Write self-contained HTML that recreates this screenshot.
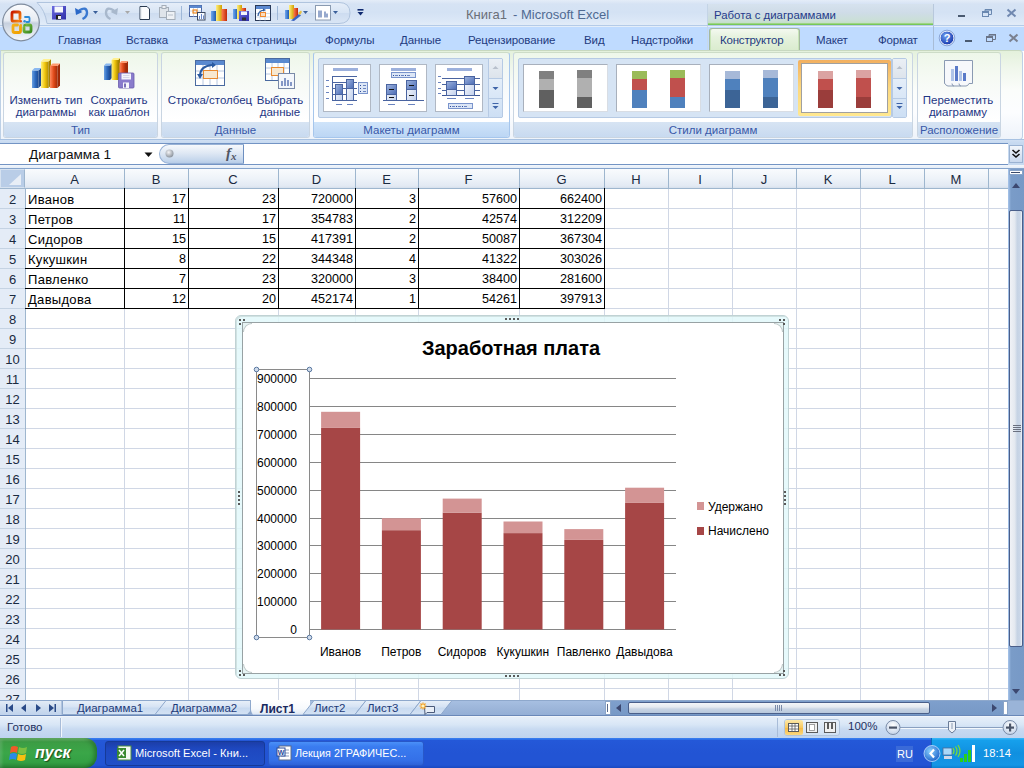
<!DOCTYPE html><html><head><meta charset="utf-8"><style>
*{margin:0;padding:0;box-sizing:border-box}
html,body{width:1024px;height:768px;overflow:hidden;background:#fff}
body{font-family:"Liberation Sans",sans-serif;position:relative}
div{position:absolute}
.t{white-space:nowrap;line-height:1}
svg{position:absolute;overflow:visible}
</style></head><body><div style="left:0px;top:0px;width:1024px;height:25px;background:linear-gradient(#e4edf8 0,#d6e3f4 4px,#d4e2f4 50%,#dce8f7 85%,#e2ecf8 100%)"></div>
<div style="left:0px;top:25px;width:1024px;height:1px;background:#b4cbe8"></div>
<div style="left:0px;top:26px;width:1024px;height:1px;background:#e4eefa"></div>
<div style="left:0px;top:27px;width:1024px;height:24px;background:#bfdbff"></div>
<svg style="left:0;top:0" width="50" height="50" viewBox="0 0 50 50">
<defs>
<linearGradient id="ob" x1="0" y1="0" x2="0" y2="1"><stop offset="0" stop-color="#fbfcfe"/><stop offset="0.45" stop-color="#e6ebf2"/><stop offset="0.52" stop-color="#c6d0de"/><stop offset="0.8" stop-color="#e2e8f0"/><stop offset="1" stop-color="#f6f8fb"/></linearGradient>
</defs>
<circle cx="21" cy="22.5" r="18.3" fill="url(#ob)" stroke="#7f8c9e" stroke-width="1.2"/>
<defs>
<linearGradient id="lr" x1="0" y1="0" x2="1" y2="1"><stop offset="0" stop-color="#c81800"/><stop offset="1" stop-color="#f88a10"/></linearGradient>
<linearGradient id="ly" x1="0" y1="0" x2="1" y2="1"><stop offset="0" stop-color="#f4b018"/><stop offset="1" stop-color="#f0a000"/></linearGradient>
<linearGradient id="lg" x1="0" y1="0" x2="1" y2="1"><stop offset="0" stop-color="#80c040"/><stop offset="1" stop-color="#3a8a20"/></linearGradient>
</defs>
<path d="M19 21.2 L13.5 21.2 Q12 21.2 12 19.7 L12 13.5 Q12 12 13.5 12 L18.5 12 Q20 12 20 13.5 L20 18.5" fill="none" stroke="url(#lr)" stroke-width="2.8" stroke-linecap="round"/>
<path d="M25 17 L28.5 17 Q29.5 17 29.5 18 L29.5 21 Q29.5 22 28.5 22 L26.5 22" fill="none" stroke="#2a8ad8" stroke-width="1.8" stroke-linecap="round"/>
<path d="M20.5 26.5 L20.5 31 Q20.5 32.5 19 32.5 L14.5 32.5 Q13 32.5 13 31 L13 26.5 Q13 25 14.5 25 L17.5 25" fill="none" stroke="url(#ly)" stroke-width="2.8" stroke-linecap="round"/>
<path d="M26 25 L29.5 25 Q31 25 31 26.5 L31 30.5 Q31 32 29.5 32 L25.5 32 Q24 32 24 30.5 L24 27.5" fill="none" stroke="url(#lg)" stroke-width="2.8" stroke-linecap="round"/>
<circle cx="20.8" cy="21.3" r="1.2" fill="#e85010"/><circle cx="24.6" cy="21.3" r="1.2" fill="#2a8ad8"/>
<circle cx="20.8" cy="25.2" r="1.2" fill="#f4a818"/><circle cx="24.6" cy="25.2" r="1.2" fill="#58a830"/>
</svg>
<svg style="left:30px;top:0" width="330" height="26">
<defs><linearGradient id="qg" x1="0" y1="0" x2="0" y2="1"><stop offset="0" stop-color="#e6eef9"/><stop offset="0.5" stop-color="#d7e4f4"/><stop offset="0.52" stop-color="#cddcf0"/><stop offset="1" stop-color="#dae6f5"/></linearGradient></defs>
<path d="M7 2.5 L309 2.5 Q320 2.5 320 13 Q320 23.5 309 23.5 L17 23.5 Q15 10 7 2.5 Z" fill="url(#qg)" stroke="#b0c4de" stroke-width="1"/>
</svg>

<svg style="left:0;top:0" width="380" height="26" viewBox="0 0 380 26">
<defs>
<linearGradient id="qfl" x1="0" y1="0" x2="1" y2="1"><stop offset="0" stop-color="#6a6ae0"/><stop offset="1" stop-color="#3030a8"/></linearGradient>
<linearGradient id="qb" x1="0" x2="1"><stop offset="0" stop-color="#70a8f0"/><stop offset="1" stop-color="#1e5ab0"/></linearGradient>
<linearGradient id="qy" x1="0" x2="1"><stop offset="0" stop-color="#fff080"/><stop offset="1" stop-color="#d0a000"/></linearGradient>
<linearGradient id="qr" x1="0" x2="1"><stop offset="0" stop-color="#ff8050"/><stop offset="1" stop-color="#c02808"/></linearGradient>
</defs>
<!-- save -->
<rect x="52" y="6" width="14" height="13.5" fill="url(#qfl)"/>
<rect x="54.5" y="6.5" width="8.5" height="6" fill="#f6f8fc"/>
<rect x="56" y="15" width="5" height="4.5" fill="#202020"/><rect x="58" y="16" width="3" height="3" fill="#f0f0f0"/>
<!-- undo -->
<path d="M79 10.5 Q86.5 6 87 12.5 Q87 17 82.5 19" fill="none" stroke="#3a78d0" stroke-width="2.4"/>
<path d="M75 8 L76 15 L82.5 12 Z" fill="#2a68c8"/>
<path d="M93 11 L98 11 L95.5 14 Z" fill="#3a5f9a"/>
<!-- redo disabled -->
<path d="M114 10.5 Q106.5 6 106 12.5 Q106 17 110.5 19" fill="none" stroke="#a8b8cc" stroke-width="2.4"/>
<path d="M118 8 L117 15 L110.5 12 Z" fill="#a8b8cc"/>
<path d="M125 11 L130 11 L127.5 14 Z" fill="#a8a8a8"/>
<!-- new doc -->
<path d="M140 6.5 L147 6.5 L149.5 9 L149.5 19.5 L140 19.5 Z" fill="#fbfcfe" stroke="#2a3a50" stroke-width="1"/>
<path d="M141 7 L141 19" stroke="#e0e4ea"/>
<!-- paste disabled -->
<rect x="159.5" y="7.5" width="9" height="10" fill="#dfe4ea" stroke="#a4adb8"/>
<rect x="162" y="5.5" width="4" height="3" fill="#eef0f4" stroke="#a4adb8"/>
<rect x="166.5" y="11.5" width="8.5" height="8" fill="#eef1f5" stroke="#a4adb8"/>
<line x1="168" y1="15" x2="173" y2="15" stroke="#b8c0ca"/>
<line x1="181.5" y1="6" x2="181.5" y2="20" stroke="#9fb8d8"/>
<!-- table + chart -->
<rect x="189.5" y="5.5" width="12" height="11" fill="#fff" stroke="#4a64a0"/><rect x="189.5" y="5.5" width="12" height="2.5" fill="#5a88d0"/>
<path d="M189.5 11 H201.5 M193.5 8 V16.5 M197.5 8 V16.5" stroke="#c0cce0" stroke-width="0.8"/>
<rect x="193" y="10" width="4" height="3" fill="none" stroke="#f08a20" stroke-width="1.2"/>
<rect x="197.5" y="12.5" width="7.5" height="7.5" fill="#fafcff" stroke="#3a4860"/>
<path d="M199.5 19 V16 M201.5 19 V14 M203.5 19 V15.5" stroke="#6a88c8" stroke-width="1"/>
<!-- chart bars -->
<rect x="211" y="11" width="5" height="10" fill="url(#qb)"/>
<rect x="216" y="5" width="6" height="16" fill="url(#qy)"/>
<rect x="221.5" y="9" width="5.5" height="12" fill="url(#qr)"/>
<!-- bars + floppy -->
<rect x="233" y="9" width="4.5" height="10" fill="url(#qb)"/>
<rect x="237" y="5" width="5" height="14" fill="url(#qy)"/>
<rect x="241.5" y="8" width="4.5" height="4" fill="url(#qr)"/>
<rect x="239" y="11" width="10" height="10" fill="url(#qfl)"/><rect x="241" y="11.5" width="6" height="3.5" fill="#f4f6fc"/><rect x="242" y="17.5" width="4" height="3" fill="#303030"/>
<!-- table w/ arrows -->
<rect x="255.5" y="5.5" width="15" height="15" fill="#fff" stroke="#2a3a58"/><rect x="256" y="6" width="14" height="3" fill="#5a88d0"/>
<path d="M256 13.5 H270 M256 17 H270 M260 9 V20.5 M265 9 V20.5" stroke="#c8d4e6" stroke-width="0.8"/>
<rect x="260.5" y="12.5" width="5" height="4" fill="#f8dcc0" stroke="#f08a30"/>
<path d="M258 16 Q258 11 264 10" fill="none" stroke="#2a5aa0" stroke-width="1.2"/><path d="M263 8.5 L266 10 L263 11.5Z" fill="#2a5aa0"/>
<line x1="277.5" y1="6" x2="277.5" y2="20" stroke="#9fb8d8"/>
<!-- chart w/ brush -->
<rect x="285" y="10" width="4" height="9" fill="url(#qb)"/>
<rect x="289" y="5" width="5" height="14" fill="url(#qy)"/>
<rect x="293.5" y="8" width="4.5" height="10" fill="url(#qr)"/>
<path d="M291 20.5 L299 14 L301 15.5 L294 21 Z" fill="#3a64c0"/><path d="M298 13 L301 10.5 L302 12 L300 15Z" fill="#e8c040"/>
<path d="M303 11 L308 11 L305.5 14 Z" fill="#3a5f9a"/>
<!-- box chart -->
<rect x="315.5" y="5.5" width="15" height="14.5" fill="#fff" stroke="#8a9ab0"/>
<path d="M319 17.5 V10.5 M321 17.5 V10.5 M325 17.5 V11.5 M327 17.5 V13.5" stroke="#6a84b8" stroke-width="1.4"/>
<path d="M333 11 L338 11 L335.5 14 Z" fill="#3a5f9a"/>
<!-- customize -->
<rect x="357.5" y="9" width="6" height="1.6" fill="#102a70"/>
<path d="M357.5 12 L363.5 12 L360.5 15.5 Z" fill="#102a70"/>
</svg>
<div class="t" style="left:466px;top:8px;font-size:13px;color:#6a6f78">Книга1</div>
<div class="t" style="left:513px;top:8px;font-size:13px;color:#4f6a92">- Microsoft Excel</div>
<div style="left:707px;top:4px;width:227px;height:21px;background:linear-gradient(#d6e2ee,#cfdce8 40%,#cadfd6 80%,#c0e0b8);border-left:1px solid #c4d4e6;border-right:1px solid #b8c8dc"></div>
<div style="left:708px;top:23px;width:225px;height:1px;background:#9cd486"></div>
<div style="left:708px;top:24px;width:225px;height:1px;background:#78c858"></div>
<div class="t" style="left:714px;top:10px;font-size:11.4px;color:#263a8c">Работа с диаграммами</div>
<svg style="left:950px;top:5px" width="74" height="16">
<rect x="8" y="10" width="7" height="2" fill="#4a5a70"/>
<rect x="32.5" y="6.5" width="6" height="5" fill="none" stroke="#6a88b0" stroke-width="1"/><rect x="32" y="6" width="7" height="2" fill="#6a88b0"/>
<path d="M35 6 V4.5 H41.5 V9.5 H39" fill="none" stroke="#6a88b0" stroke-width="1"/><rect x="35" y="4" width="7" height="1.6" fill="#6a88b0"/>
<path d="M57.5 4.5 L65.5 11.5 M65.5 4.5 L57.5 11.5" stroke="#7088b0" stroke-width="2"/>
</svg>
<div class="t" style="left:58px;top:35px;font-size:11.5px;letter-spacing:-0.1px;color:#1e3a80">Главная</div>
<div class="t" style="left:126px;top:35px;font-size:11.5px;letter-spacing:-0.1px;color:#1e3a80">Вставка</div>
<div class="t" style="left:194px;top:35px;font-size:11.5px;letter-spacing:-0.1px;color:#1e3a80">Разметка страницы</div>
<div class="t" style="left:325px;top:35px;font-size:11.5px;letter-spacing:-0.1px;color:#1e3a80">Формулы</div>
<div class="t" style="left:400px;top:35px;font-size:11.5px;letter-spacing:-0.1px;color:#1e3a80">Данные</div>
<div class="t" style="left:468px;top:35px;font-size:11.5px;letter-spacing:-0.1px;color:#1e3a80">Рецензирование</div>
<div class="t" style="left:584px;top:35px;font-size:11.5px;letter-spacing:-0.1px;color:#1e3a80">Вид</div>
<div class="t" style="left:631px;top:35px;font-size:11.5px;letter-spacing:-0.1px;color:#1e3a80">Надстройки</div>
<div style="left:707px;top:26px;width:1px;height:24px;background:#c8d8ea"></div>
<div style="left:933px;top:26px;width:1px;height:24px;background:#a8bcd6"></div>
<div style="left:709px;top:28px;width:91px;height:24px;border:1px solid #a4b8a0;border-bottom:none;border-radius:3px 3px 0 0;background:linear-gradient(#f4f9f0,#e6f2de 35%,#d8ebcc 100%);box-shadow:inset 1px 0 0 #c8e4b8,inset -1px 0 0 #c8e4b8"></div>
<div class="t" style="left:720px;top:35px;font-size:11.5px;letter-spacing:-0.2px;color:#1e3a80">Конструктор</div>
<div class="t" style="left:816px;top:35px;font-size:11.5px;letter-spacing:-0.2px;color:#1e3a80">Макет</div>
<div class="t" style="left:878px;top:35px;font-size:11.5px;letter-spacing:-0.2px;color:#1e3a80">Формат</div>
<svg style="left:936px;top:28px" width="88" height="20">
<defs><radialGradient id="hg" cx="40%" cy="35%" r="70%"><stop offset="0" stop-color="#6fa0f0"/><stop offset="1" stop-color="#1030a8"/></radialGradient></defs>
<circle cx="11" cy="10" r="7" fill="url(#hg)" stroke="#fff" stroke-width="1"/>
<circle cx="11" cy="10" r="7.8" fill="none" stroke="#5a78b8" stroke-width="0.6"/>
<text x="11" y="14" font-family="Liberation Sans" font-weight="bold" font-size="11" fill="#fff" text-anchor="middle">?</text>
<rect x="29" y="12" width="7" height="2" fill="#4a5a70"/>
<rect x="50.5" y="8.5" width="6" height="5" fill="none" stroke="#6a7488" stroke-width="1"/><rect x="50" y="8" width="7" height="2" fill="#6a7488"/>
<path d="M53 8 V6.5 H59.5 V11.5 H57" fill="none" stroke="#6a7488" stroke-width="1"/><rect x="53" y="6" width="7" height="1.6" fill="#6a7488"/>
<path d="M73.5 6.5 L81.5 13.5 M81.5 6.5 L73.5 13.5" stroke="#7a8090" stroke-width="2"/>
</svg>
<div style="left:0px;top:50px;width:1023px;height:90px;border:1px solid #bdd0e6;border-top-color:#c8d8c0;border-radius:0 4px 4px 0;background:linear-gradient(#e4f1dc 0%,#f0f7ec 20%,#fbfdfb 45%,#fcfdff 70%,#eef3fa 100%)"></div>
<div style="left:3px;top:52px;width:155px;height:86px;border:1px solid #c9d5e2;border-top-color:#cddcc8;border-radius:3px;background:linear-gradient(#eef7ea 0%,#f6faf4 30%,#fbfcfd 60%,#ffffff 80%)"></div>
<div style="left:4px;top:122px;width:153px;height:15px;border-radius:0 0 2px 2px;background:linear-gradient(#d7e4f3,#c8daf0)"></div>
<div class="t" style="left:3px;top:125px;width:155px;text-align:center;font-size:11.5px;color:#3858a8">Тип</div>
<div style="left:161px;top:52px;width:149px;height:86px;border:1px solid #c9d5e2;border-top-color:#cddcc8;border-radius:3px;background:linear-gradient(#eef7ea 0%,#f6faf4 30%,#fbfcfd 60%,#ffffff 80%)"></div>
<div style="left:162px;top:122px;width:147px;height:15px;border-radius:0 0 2px 2px;background:linear-gradient(#d7e4f3,#c8daf0)"></div>
<div class="t" style="left:161px;top:125px;width:149px;text-align:center;font-size:11.5px;color:#3858a8">Данные</div>
<div style="left:313px;top:52px;width:197px;height:86px;border:1px solid #a6c6ec;border-top-color:#cddcc8;border-radius:3px;background:linear-gradient(#eef6ee 0%,#f4f8f8 30%,#fafcfe 60%,#ffffff 80%)"></div>
<div style="left:314px;top:122px;width:195px;height:15px;border-radius:0 0 2px 2px;background:linear-gradient(#cfe4fa,#bcd6f4)"></div>
<div class="t" style="left:313px;top:125px;width:197px;text-align:center;font-size:11.5px;color:#3858a8">Макеты диаграмм</div>
<div style="left:513px;top:52px;width:400px;height:86px;border:1px solid #c9d5e2;border-top-color:#cddcc8;border-radius:3px;background:linear-gradient(#eef7ea 0%,#f6faf4 30%,#fbfcfd 60%,#ffffff 80%)"></div>
<div style="left:514px;top:122px;width:398px;height:15px;border-radius:0 0 2px 2px;background:linear-gradient(#d7e4f3,#c8daf0)"></div>
<div class="t" style="left:513px;top:125px;width:400px;text-align:center;font-size:11.5px;color:#3858a8">Стили диаграмм</div>
<div style="left:917px;top:52px;width:84px;height:86px;border:1px solid #c9d5e2;border-top-color:#cddcc8;border-radius:3px;background:linear-gradient(#eef7ea 0%,#f6faf4 30%,#fbfcfd 60%,#ffffff 80%)"></div>
<div style="left:918px;top:122px;width:82px;height:15px;border-radius:0 0 2px 2px;background:linear-gradient(#d7e4f3,#c8daf0)"></div>
<div class="t" style="left:917px;top:125px;width:84px;text-align:center;font-size:11.5px;color:#3858a8">Расположение</div>
<div class="t" style="left:-14px;top:95px;width:120px;text-align:center;font-size:11.5px;color:#1e3684">Изменить тип</div>
<div class="t" style="left:-14px;top:107px;width:120px;text-align:center;font-size:11.5px;color:#1e3684">диаграммы</div>
<div class="t" style="left:59px;top:95px;width:120px;text-align:center;font-size:11.5px;color:#1e3684">Сохранить</div>
<div class="t" style="left:59px;top:107px;width:120px;text-align:center;font-size:11.5px;color:#1e3684">как шаблон</div>
<div class="t" style="left:150px;top:95px;width:120px;text-align:center;font-size:11.5px;color:#1e3684">Строка/столбец</div>
<div class="t" style="left:220px;top:95px;width:120px;text-align:center;font-size:11.5px;color:#1e3684">Выбрать</div>
<div class="t" style="left:220px;top:107px;width:120px;text-align:center;font-size:11.5px;color:#1e3684">данные</div>
<div class="t" style="left:898px;top:95px;width:120px;text-align:center;font-size:11.5px;color:#1e3684">Переместить</div>
<div class="t" style="left:898px;top:107px;width:120px;text-align:center;font-size:11.5px;color:#1e3684">диаграмму</div>
<svg style="left:0;top:52px" width="320" height="40">
<defs>
<linearGradient id="bb" x1="0" x2="1"><stop offset="0" stop-color="#6aa0e0"/><stop offset="0.5" stop-color="#2e6cc0"/><stop offset="1" stop-color="#1e4a90"/></linearGradient>
<linearGradient id="by" x1="0" x2="1"><stop offset="0" stop-color="#fff07a"/><stop offset="0.5" stop-color="#f2c810"/><stop offset="1" stop-color="#b08a00"/></linearGradient>
<linearGradient id="br" x1="0" x2="1"><stop offset="0" stop-color="#ff8a60"/><stop offset="0.5" stop-color="#e04a1a"/><stop offset="1" stop-color="#a02a08"/></linearGradient>
</defs>
<!-- change chart type -->
<path d="M32 18.5 H38.5 V36 H32 Z" fill="url(#bb)"/><path d="M38.5 18.5 L41 16 V33.5 L38.5 36 Z" fill="#1e4a90"/><path d="M32 18.5 L34.5 16 H41 L38.5 18.5 Z" fill="#8ab8f0"/><path d="M41 9.5 H48.5 V36 H41 Z" fill="url(#by)"/><path d="M48.5 9.5 L51 7 V33.5 L48.5 36 Z" fill="#a88400"/><path d="M41 9.5 L43.5 7 H51 L48.5 9.5 Z" fill="#fff090"/><path d="M50 14.0 H57.5 V36 H50 Z" fill="url(#br)"/><path d="M57.5 14.0 L60 11.5 V33.5 L57.5 36 Z" fill="#a02a08"/><path d="M50 14.0 L52.5 11.5 H60 L57.5 14.0 Z" fill="#ff9a70"/>
<!-- save as template -->
<path d="M104 13.5 H110 V28 H104 Z" fill="url(#bb)"/><path d="M110 13.5 L112 11.5 V26 L110 28 Z" fill="#1e4a90"/><path d="M104 13.5 L106 11.5 H112 L110 13.5 Z" fill="#8ab8f0"/><path d="M111.5 8 H118.0 V28 H111.5 Z" fill="url(#by)"/><path d="M118.0 8 L120.0 6 V26 L118.0 28 Z" fill="#a88400"/><path d="M111.5 8 L113.5 6 H120.0 L118.0 8 Z" fill="#fff090"/><path d="M119.5 11 H126.0 V28 H119.5 Z" fill="url(#br)"/><path d="M126.0 11 L128.0 9 V26 L126.0 28 Z" fill="#a02a08"/><path d="M119.5 11 L121.5 9 H128.0 L126.0 11 Z" fill="#ff9a70"/><rect x="118.5" y="21" width="15.5" height="15" rx="1" fill="#8a7ccc" stroke="#6a5cac" stroke-width="0.8"/><rect x="121.5" y="21.5" width="9.5" height="6" fill="#f4f4fc"/><path d="M123 23.5 H129.5 M123 25.5 H129.5" stroke="#c8c8e0" stroke-width="0.7"/><rect x="123" y="30.5" width="6" height="5.5" fill="#f8f8fc"/><rect x="124" y="31.5" width="2" height="4" fill="#7a70b8"/>
<!-- switch row/col -->
<rect x="195.5" y="8.5" width="29" height="25" fill="#fff" stroke="#4a6aa0"/>
<rect x="196" y="9" width="28" height="4" fill="#5a8ad0"/>
<path d="M196 19 H224 M196 26 H224 M203 13 V33 M210 13 V33 M217 13 V33" stroke="#b8c8e0"/>
<rect x="203.5" y="18.5" width="14" height="8" fill="#f8e8d0" stroke="#e88a30"/>
<path d="M200 24 Q200 14 212 13" fill="none" stroke="#2a5aa0" stroke-width="2"/>
<path d="M212 10 L216 13 L212 16Z" fill="#2a5aa0"/><path d="M197 22 L200 27 L203 22Z" fill="#2a5aa0"/>
<!-- select data -->
<rect x="265.5" y="6.5" width="24" height="22" fill="#fff" stroke="#4a6aa0"/>
<rect x="266" y="7" width="23" height="4" fill="#5a8ad0"/>
<path d="M266 16 H289 M266 22 H289 M272 11 V28 M278 11 V28 M284 11 V28" stroke="#b8c8e0"/>
<rect x="271.5" y="15.5" width="12" height="8" fill="#f8e8d0" stroke="#e88a30"/>
<rect x="278.5" y="21.5" width="16" height="15" fill="#f4f7fc" stroke="#7a8aa8"/>
<path d="M282 34 V29 M285 34 V26 M288 34 V28 M291 34 V30" stroke="#6a80b8" stroke-width="1.6"/>
</svg>
<svg style="left:940px;top:58px" width="40" height="32">
<path d="M4.5 2.5 H32.5 V25.5 H29 Q28 28 26 28 H8 Q6 28 5 25.5 H4.5 Z" fill="#f6f8fb" stroke="#8a9ab2"/>
<path d="M12 25.5 Q12 28 14 28 M19 25.5 Q19 28 21 28" fill="none" stroke="#8a9ab2"/>
<rect x="11" y="11" width="3" height="12" fill="#b0c4e8"/><rect x="15" y="8" width="3" height="15" fill="#5a7ac8"/>
<rect x="19" y="13" width="3" height="10" fill="#b0c4e8"/><rect x="23" y="15" width="3" height="8" fill="#5a7ac8"/>
</svg>
<div style="left:318px;top:58px;width:185px;height:60px;border:1px solid #b6cae4;border-radius:2px;background:#d6e4f4"></div>
<div style="left:323px;top:64px;width:48px;height:48px;border:1px solid #b0b8c4;background:#fff"></div>
<div style="left:379px;top:64px;width:48px;height:48px;border:1px solid #b0b8c4;background:#fff"></div>
<div style="left:435px;top:64px;width:48px;height:48px;border:1px solid #b0b8c4;background:#fff"></div>
<svg style="left:0;top:0" width="520" height="130">
<defs>
<linearGradient id="ld" x1="0" y1="0" x2="1" y2="1"><stop offset="0" stop-color="#9ab0dc"/><stop offset="1" stop-color="#5070b8"/></linearGradient>
<linearGradient id="ll" x1="0" y1="0" x2="1" y2="1"><stop offset="0" stop-color="#ffffff"/><stop offset="1" stop-color="#c0cfec"/></linearGradient>
</defs>
<g shape-rendering="crispEdges">
<!-- thumb 1 -->
<rect x="333" y="68" width="25" height="3" fill="#9cb0dc"/>
<path d="M332 76.5 H357 M332 82.5 H357 M332 88.5 H357 M332 94.5 H357 M332 100.5 H357 M332.5 76 V101" stroke="#4a64a0" stroke-width="1"/>
<path d="M326 80.5 H329 M326 86.5 H329 M326 92.5 H329 M326 98.5 H329 M336 104.5 H342 M347 104.5 H353" stroke="#6a84c0" stroke-width="1"/>
<rect x="335.5" y="84.5" width="7" height="16" fill="url(#ll)" stroke="#4a64a0"/><rect x="336" y="85" width="6" height="9" fill="url(#ld)"/><path d="M336 94.5 H342" stroke="#4a64a0"/>
<rect x="346.5" y="79.5" width="7" height="21" fill="url(#ll)" stroke="#4a64a0"/><rect x="347" y="80" width="6" height="8" fill="url(#ld)"/><path d="M347 88.5 H353" stroke="#4a64a0"/>
<rect x="358.5" y="82.5" width="9" height="11" fill="#dce6f6" stroke="#7a94cc"/>
<path d="M360 85.5 H361 M360 88.5 H361 M360 91.5 H361" stroke="#2a4a98" stroke-width="1.5"/><path d="M363 85.5 H366 M363 88.5 H366 M363 91.5 H366" stroke="#6a84c0"/>
<!-- thumb 2 -->
<rect x="391" y="68" width="25" height="3" fill="#9cb0dc"/>
<rect x="391.5" y="72.5" width="24" height="5" fill="#dce6f6" stroke="#7a94cc"/>
<path d="M393 75.5 H394 M399 75.5 H400 M405 75.5 H406" stroke="#2a4a98" stroke-width="1.5"/><path d="M395 75.5 H398 M401 75.5 H404 M407 75.5 H410" stroke="#6a84c0"/>
<path d="M383 100.5 H424" stroke="#4a64a0" stroke-width="1"/>
<rect x="386.5" y="84.5" width="10" height="16" fill="url(#ll)" stroke="#4a64a0"/><rect x="387" y="85" width="9" height="9" fill="url(#ld)"/><path d="M387 94.5 H396" stroke="#4a64a0"/>
<rect x="406.5" y="80.5" width="10" height="20" fill="url(#ll)" stroke="#4a64a0"/><rect x="407" y="81" width="9" height="8" fill="url(#ld)"/><path d="M407 89.5 H416" stroke="#4a64a0"/>
<path d="M389 89.5 H394 M389 97.5 H394 M409 85.5 H414 M409 95.5 H414" stroke="#101010" stroke-width="1"/>
<path d="M388 104.5 H395 M408 104.5 H415" stroke="#6a84c0"/>
<!-- thumb 3 -->
<rect x="447" y="68" width="25" height="3" fill="#9cb0dc"/>
<path d="M442 78.5 H480 M442 84.5 H480 M442 90.5 H480" stroke="#4a64a0" stroke-width="1"/>
<path d="M442 95.5 H480" stroke="#3a5494" stroke-width="1"/>
<path d="M438 76.5 H441 M438 82.5 H441 M438 88.5 H441 M438 93.5 H441 M447 98.5 H456 M465 98.5 H474" stroke="#6a84c0"/>
<rect x="446.5" y="81.5" width="10" height="14" fill="url(#ll)" stroke="#4a64a0"/><rect x="447" y="82" width="9" height="7" fill="url(#ld)"/><path d="M447 89.5 H456" stroke="#4a64a0"/>
<rect x="464.5" y="76.5" width="10" height="19" fill="url(#ll)" stroke="#4a64a0"/><rect x="465" y="77" width="9" height="7" fill="url(#ld)"/><path d="M465 84.5 H474" stroke="#4a64a0"/>
<rect x="448.5" y="103.5" width="24" height="5" fill="#dce6f6" stroke="#7a94cc"/>
<path d="M450 106.5 H451 M456 106.5 H457 M462 106.5 H463" stroke="#2a4a98" stroke-width="1.5"/><path d="M452 106.5 H455 M458 106.5 H461 M464 106.5 H467" stroke="#6a84c0"/>
</g>
</svg>
<div style="left:488px;top:58px;width:15px;height:60px;border:1px solid #b6cae4;border-radius:2px;background:linear-gradient(90deg,#e2ebf6,#d2e0f2)"></div>
<div style="left:489px;top:59px;width:13px;height:19px;background:linear-gradient(#eaeff5,#dde4ec)"></div>
<div style="left:489px;top:79px;width:13px;height:38px;background:linear-gradient(#e4eef9,#cddff4)"></div>
<div style="left:489px;top:78px;width:13px;height:1px;background:#b6cae4"></div>
<div style="left:489px;top:98px;width:13px;height:1px;background:#b6cae4"></div>
<svg style="left:488px;top:58px" width="15" height="60">
<path d="M4.5 11 L7.5 8 L10.5 11Z" fill="#b8c0cc"/>
<path d="M4.5 29 L10.5 29 L7.5 32Z" fill="#3e64a8"/>
<rect x="4.5" y="45" width="6" height="1" fill="#3e64a8"/><path d="M4.5 48 L10.5 48 L7.5 51Z" fill="#3e64a8"/>
</svg>
<div style="left:518px;top:58px;width:374px;height:60px;border:1px solid #b6cae4;border-radius:2px;background:#d6e4f4"></div>
<div style="left:892px;top:58px;width:15px;height:60px;border:1px solid #b6cae4;border-radius:2px;background:linear-gradient(90deg,#e2ebf6,#d2e0f2)"></div>
<div style="left:893px;top:59px;width:13px;height:19px;background:linear-gradient(#eaeff5,#dde4ec)"></div>
<div style="left:893px;top:79px;width:13px;height:38px;background:linear-gradient(#e4eef9,#cddff4)"></div>
<div style="left:893px;top:78px;width:13px;height:1px;background:#b6cae4"></div>
<div style="left:893px;top:98px;width:13px;height:1px;background:#b6cae4"></div>
<svg style="left:892px;top:58px" width="15" height="60">
<path d="M4.5 11 L7.5 8 L10.5 11Z" fill="#b8c0cc"/>
<path d="M4.5 29 L10.5 29 L7.5 32Z" fill="#3e64a8"/>
<rect x="4.5" y="45" width="6" height="1" fill="#3e64a8"/><path d="M4.5 48 L10.5 48 L7.5 51Z" fill="#3e64a8"/>
</svg>
<div style="left:523px;top:64px;width:85px;height:48px;border:1px solid #a8b0bc;border-right-color:#d8dde4;border-bottom-color:#d8dde4;background:#fff"></div>
<div style="left:539px;top:71px;width:15px;height:8px;background:#808080"></div>
<div style="left:539px;top:79px;width:15px;height:11px;background:#b0b0b0"></div>
<div style="left:539px;top:90px;width:15px;height:18px;background:#606060"></div>
<div style="left:577px;top:70px;width:15px;height:8px;background:#808080"></div>
<div style="left:577px;top:78px;width:15px;height:19px;background:#b0b0b0"></div>
<div style="left:577px;top:97px;width:15px;height:11px;background:#606060"></div>
<div style="left:616px;top:64px;width:85px;height:48px;border:1px solid #a8b0bc;border-right-color:#d8dde4;border-bottom-color:#d8dde4;background:#fff"></div>
<div style="left:632px;top:71px;width:15px;height:8px;background:#9bbb59"></div>
<div style="left:632px;top:79px;width:15px;height:11px;background:#c0504d"></div>
<div style="left:632px;top:90px;width:15px;height:18px;background:#4f81bd"></div>
<div style="left:670px;top:70px;width:15px;height:8px;background:#9bbb59"></div>
<div style="left:670px;top:78px;width:15px;height:19px;background:#c0504d"></div>
<div style="left:670px;top:97px;width:15px;height:11px;background:#4f81bd"></div>
<div style="left:709px;top:64px;width:85px;height:48px;border:1px solid #a8b0bc;border-right-color:#d8dde4;border-bottom-color:#d8dde4;background:#fff"></div>
<div style="left:725px;top:71px;width:15px;height:8px;background:#a7b9d8"></div>
<div style="left:725px;top:79px;width:15px;height:11px;background:#4f81bd"></div>
<div style="left:725px;top:90px;width:15px;height:18px;background:#3c6496"></div>
<div style="left:763px;top:70px;width:15px;height:8px;background:#a7b9d8"></div>
<div style="left:763px;top:78px;width:15px;height:19px;background:#4f81bd"></div>
<div style="left:763px;top:97px;width:15px;height:11px;background:#3c6496"></div>
<div style="left:798px;top:60px;width:93px;height:56px;border-radius:2px;background:linear-gradient(#f2b060,#fcd880 50%,#ffe890)"></div>
<div style="left:801px;top:63px;width:87px;height:50px;background:#fff;border:1px solid #a0a0a0"></div>
<div style="left:818px;top:71px;width:15px;height:8px;background:#dba3a2"></div>
<div style="left:818px;top:79px;width:15px;height:11px;background:#c0504d"></div>
<div style="left:818px;top:90px;width:15px;height:18px;background:#9a3d3b"></div>
<div style="left:856px;top:70px;width:15px;height:8px;background:#dba3a2"></div>
<div style="left:856px;top:78px;width:15px;height:19px;background:#c0504d"></div>
<div style="left:856px;top:97px;width:15px;height:11px;background:#9a3d3b"></div>
<div style="left:0;top:139px;width:1024px;height:30px;background:linear-gradient(#a8c2e2 0,#a8c2e2 1px,#cfdff3 1px,#c6d9f0 4px)"></div>
<div style="left:0;top:143px;width:1008px;height:22px;background:#fff;border-top:1px solid #7394c4;border-bottom:1px solid #7394c4"></div>
<div style="left:0;top:165px;width:1024px;height:3px;background:linear-gradient(#f2f6fb,#e4edf8)"></div>
<div style="left:0;top:168px;width:1024px;height:1px;background:#86a4cc"></div>
<div class="t" style="left:29px;top:148px;font-size:13.6px;color:#101010">Диаграмма 1</div>
<svg style="left:144px;top:152px" width="10" height="6"><path d="M0.5 0.5 L8.5 0.5 L4.5 5Z" fill="#101010"/></svg>
<div style="left:159px;top:144px;width:85px;height:20px;border:1px solid #98b2d6;border-radius:10px 0 0 10px;border-right:1px solid #6d8fc0;background:linear-gradient(#f6f9fc,#dfe8f4 45%,#c4d6ec 85%,#b6cce8)"></div>
<svg style="left:163px;top:147px" width="14" height="14"><defs><radialGradient id="fxc" cx="40%" cy="35%" r="65%"><stop offset="0" stop-color="#f4f4f6"/><stop offset="1" stop-color="#8c949e"/></radialGradient></defs><circle cx="6.5" cy="6.5" r="4" fill="url(#fxc)"/></svg>
<div class="t" style="left:226px;top:146px;font-family:'Liberation Serif';font-style:italic;font-weight:bold;font-size:15px;color:#505664">f</div>
<div class="t" style="left:231px;top:151px;font-family:'Liberation Serif';font-style:italic;font-weight:bold;font-size:11px;color:#505664">x</div>
<div style="left:1009px;top:145px;width:14px;height:18px;border:1px solid #9ab2d2;background:linear-gradient(#f2f6fb,#c8d8ee)"></div>
<svg style="left:1009px;top:145px" width="14" height="18"><path d="M3.5 5 L7 8 L10.5 5 M3.5 9 L7 12 L10.5 9" fill="none" stroke="#101010" stroke-width="1.6"/></svg>
<div style="left:0;top:169px;width:1008px;height:19px;background:linear-gradient(#f9fbfd,#eef3f9 50%,#e2e9f3 90%,#d6e0ec)"></div>
<div style="left:0;top:188px;width:1008px;height:1px;background:#9eb6ce"></div>
<div style="left:0;top:169px;width:25px;height:19px;background:#b9cde7;border:1px solid #d6e2f0;border-right-color:#9eb6ce"></div>
<svg style="left:0;top:169px" width="25" height="19"><path d="M9 16 L21 16 L21 5Z" fill="#e8eef6"/></svg>
<div style="left:124px;top:169px;width:1px;height:19px;background:#9eb6ce"></div>
<div class="t" style="left:25px;top:173px;width:99px;text-align:center;font-size:13px;color:#1a2a40">A</div>
<div style="left:188px;top:169px;width:1px;height:19px;background:#9eb6ce"></div>
<div class="t" style="left:124px;top:173px;width:64px;text-align:center;font-size:13px;color:#1a2a40">B</div>
<div style="left:278px;top:169px;width:1px;height:19px;background:#9eb6ce"></div>
<div class="t" style="left:188px;top:173px;width:90px;text-align:center;font-size:13px;color:#1a2a40">C</div>
<div style="left:355px;top:169px;width:1px;height:19px;background:#9eb6ce"></div>
<div class="t" style="left:278px;top:173px;width:77px;text-align:center;font-size:13px;color:#1a2a40">D</div>
<div style="left:418px;top:169px;width:1px;height:19px;background:#9eb6ce"></div>
<div class="t" style="left:355px;top:173px;width:63px;text-align:center;font-size:13px;color:#1a2a40">E</div>
<div style="left:519px;top:169px;width:1px;height:19px;background:#9eb6ce"></div>
<div class="t" style="left:418px;top:173px;width:101px;text-align:center;font-size:13px;color:#1a2a40">F</div>
<div style="left:604px;top:169px;width:1px;height:19px;background:#9eb6ce"></div>
<div class="t" style="left:519px;top:173px;width:85px;text-align:center;font-size:13px;color:#1a2a40">G</div>
<div style="left:668px;top:169px;width:1px;height:19px;background:#9eb6ce"></div>
<div class="t" style="left:604px;top:173px;width:64px;text-align:center;font-size:13px;color:#1a2a40">H</div>
<div style="left:732px;top:169px;width:1px;height:19px;background:#9eb6ce"></div>
<div class="t" style="left:668px;top:173px;width:64px;text-align:center;font-size:13px;color:#1a2a40">I</div>
<div style="left:796px;top:169px;width:1px;height:19px;background:#9eb6ce"></div>
<div class="t" style="left:732px;top:173px;width:64px;text-align:center;font-size:13px;color:#1a2a40">J</div>
<div style="left:860px;top:169px;width:1px;height:19px;background:#9eb6ce"></div>
<div class="t" style="left:796px;top:173px;width:64px;text-align:center;font-size:13px;color:#1a2a40">K</div>
<div style="left:924px;top:169px;width:1px;height:19px;background:#9eb6ce"></div>
<div class="t" style="left:860px;top:173px;width:64px;text-align:center;font-size:13px;color:#1a2a40">L</div>
<div style="left:988px;top:169px;width:1px;height:19px;background:#9eb6ce"></div>
<div class="t" style="left:924px;top:173px;width:64px;text-align:center;font-size:13px;color:#1a2a40">M</div>
<div style="left:1008px;top:169px;width:1px;height:19px;background:#9eb6ce"></div>
<div style="left:0;top:189px;width:25px;height:511px;background:#e4ecf7"></div>
<div style="left:25px;top:189px;width:1px;height:511px;background:#9eb6ce"></div>
<div style="left:0;top:208px;width:25px;height:1px;background:#c5d3e3"></div>
<div style="left:26px;top:208px;width:982px;height:1px;background:#d0d7e5"></div>
<div class="t" style="left:0;top:193px;width:25px;text-align:center;font-size:13px;color:#1a2a40">2</div>
<div style="left:0;top:228px;width:25px;height:1px;background:#c5d3e3"></div>
<div style="left:26px;top:228px;width:982px;height:1px;background:#d0d7e5"></div>
<div class="t" style="left:0;top:213px;width:25px;text-align:center;font-size:13px;color:#1a2a40">3</div>
<div style="left:0;top:248px;width:25px;height:1px;background:#c5d3e3"></div>
<div style="left:26px;top:248px;width:982px;height:1px;background:#d0d7e5"></div>
<div class="t" style="left:0;top:233px;width:25px;text-align:center;font-size:13px;color:#1a2a40">4</div>
<div style="left:0;top:268px;width:25px;height:1px;background:#c5d3e3"></div>
<div style="left:26px;top:268px;width:982px;height:1px;background:#d0d7e5"></div>
<div class="t" style="left:0;top:253px;width:25px;text-align:center;font-size:13px;color:#1a2a40">5</div>
<div style="left:0;top:288px;width:25px;height:1px;background:#c5d3e3"></div>
<div style="left:26px;top:288px;width:982px;height:1px;background:#d0d7e5"></div>
<div class="t" style="left:0;top:273px;width:25px;text-align:center;font-size:13px;color:#1a2a40">6</div>
<div style="left:0;top:308px;width:25px;height:1px;background:#c5d3e3"></div>
<div style="left:26px;top:308px;width:982px;height:1px;background:#d0d7e5"></div>
<div class="t" style="left:0;top:293px;width:25px;text-align:center;font-size:13px;color:#1a2a40">7</div>
<div style="left:0;top:328px;width:25px;height:1px;background:#c5d3e3"></div>
<div style="left:26px;top:328px;width:982px;height:1px;background:#d0d7e5"></div>
<div class="t" style="left:0;top:313px;width:25px;text-align:center;font-size:13px;color:#1a2a40">8</div>
<div style="left:0;top:348px;width:25px;height:1px;background:#c5d3e3"></div>
<div style="left:26px;top:348px;width:982px;height:1px;background:#d0d7e5"></div>
<div class="t" style="left:0;top:333px;width:25px;text-align:center;font-size:13px;color:#1a2a40">9</div>
<div style="left:0;top:368px;width:25px;height:1px;background:#c5d3e3"></div>
<div style="left:26px;top:368px;width:982px;height:1px;background:#d0d7e5"></div>
<div class="t" style="left:0;top:353px;width:25px;text-align:center;font-size:13px;color:#1a2a40">10</div>
<div style="left:0;top:388px;width:25px;height:1px;background:#c5d3e3"></div>
<div style="left:26px;top:388px;width:982px;height:1px;background:#d0d7e5"></div>
<div class="t" style="left:0;top:373px;width:25px;text-align:center;font-size:13px;color:#1a2a40">11</div>
<div style="left:0;top:408px;width:25px;height:1px;background:#c5d3e3"></div>
<div style="left:26px;top:408px;width:982px;height:1px;background:#d0d7e5"></div>
<div class="t" style="left:0;top:393px;width:25px;text-align:center;font-size:13px;color:#1a2a40">12</div>
<div style="left:0;top:428px;width:25px;height:1px;background:#c5d3e3"></div>
<div style="left:26px;top:428px;width:982px;height:1px;background:#d0d7e5"></div>
<div class="t" style="left:0;top:413px;width:25px;text-align:center;font-size:13px;color:#1a2a40">13</div>
<div style="left:0;top:448px;width:25px;height:1px;background:#c5d3e3"></div>
<div style="left:26px;top:448px;width:982px;height:1px;background:#d0d7e5"></div>
<div class="t" style="left:0;top:433px;width:25px;text-align:center;font-size:13px;color:#1a2a40">14</div>
<div style="left:0;top:468px;width:25px;height:1px;background:#c5d3e3"></div>
<div style="left:26px;top:468px;width:982px;height:1px;background:#d0d7e5"></div>
<div class="t" style="left:0;top:453px;width:25px;text-align:center;font-size:13px;color:#1a2a40">15</div>
<div style="left:0;top:488px;width:25px;height:1px;background:#c5d3e3"></div>
<div style="left:26px;top:488px;width:982px;height:1px;background:#d0d7e5"></div>
<div class="t" style="left:0;top:473px;width:25px;text-align:center;font-size:13px;color:#1a2a40">16</div>
<div style="left:0;top:508px;width:25px;height:1px;background:#c5d3e3"></div>
<div style="left:26px;top:508px;width:982px;height:1px;background:#d0d7e5"></div>
<div class="t" style="left:0;top:493px;width:25px;text-align:center;font-size:13px;color:#1a2a40">17</div>
<div style="left:0;top:528px;width:25px;height:1px;background:#c5d3e3"></div>
<div style="left:26px;top:528px;width:982px;height:1px;background:#d0d7e5"></div>
<div class="t" style="left:0;top:513px;width:25px;text-align:center;font-size:13px;color:#1a2a40">18</div>
<div style="left:0;top:548px;width:25px;height:1px;background:#c5d3e3"></div>
<div style="left:26px;top:548px;width:982px;height:1px;background:#d0d7e5"></div>
<div class="t" style="left:0;top:533px;width:25px;text-align:center;font-size:13px;color:#1a2a40">19</div>
<div style="left:0;top:568px;width:25px;height:1px;background:#c5d3e3"></div>
<div style="left:26px;top:568px;width:982px;height:1px;background:#d0d7e5"></div>
<div class="t" style="left:0;top:553px;width:25px;text-align:center;font-size:13px;color:#1a2a40">20</div>
<div style="left:0;top:588px;width:25px;height:1px;background:#c5d3e3"></div>
<div style="left:26px;top:588px;width:982px;height:1px;background:#d0d7e5"></div>
<div class="t" style="left:0;top:573px;width:25px;text-align:center;font-size:13px;color:#1a2a40">21</div>
<div style="left:0;top:608px;width:25px;height:1px;background:#c5d3e3"></div>
<div style="left:26px;top:608px;width:982px;height:1px;background:#d0d7e5"></div>
<div class="t" style="left:0;top:593px;width:25px;text-align:center;font-size:13px;color:#1a2a40">22</div>
<div style="left:0;top:628px;width:25px;height:1px;background:#c5d3e3"></div>
<div style="left:26px;top:628px;width:982px;height:1px;background:#d0d7e5"></div>
<div class="t" style="left:0;top:613px;width:25px;text-align:center;font-size:13px;color:#1a2a40">23</div>
<div style="left:0;top:648px;width:25px;height:1px;background:#c5d3e3"></div>
<div style="left:26px;top:648px;width:982px;height:1px;background:#d0d7e5"></div>
<div class="t" style="left:0;top:633px;width:25px;text-align:center;font-size:13px;color:#1a2a40">24</div>
<div style="left:0;top:668px;width:25px;height:1px;background:#c5d3e3"></div>
<div style="left:26px;top:668px;width:982px;height:1px;background:#d0d7e5"></div>
<div class="t" style="left:0;top:653px;width:25px;text-align:center;font-size:13px;color:#1a2a40">25</div>
<div style="left:0;top:688px;width:25px;height:1px;background:#c5d3e3"></div>
<div style="left:26px;top:688px;width:982px;height:1px;background:#d0d7e5"></div>
<div class="t" style="left:0;top:673px;width:25px;text-align:center;font-size:13px;color:#1a2a40">26</div>
<div class="t" style="left:0;top:693px;width:25px;text-align:center;font-size:13px;color:#1a2a40">27</div>
<div style="left:124px;top:189px;width:1px;height:511px;background:#d0d7e5"></div>
<div style="left:188px;top:189px;width:1px;height:511px;background:#d0d7e5"></div>
<div style="left:278px;top:189px;width:1px;height:511px;background:#d0d7e5"></div>
<div style="left:355px;top:189px;width:1px;height:511px;background:#d0d7e5"></div>
<div style="left:418px;top:189px;width:1px;height:511px;background:#d0d7e5"></div>
<div style="left:519px;top:189px;width:1px;height:511px;background:#d0d7e5"></div>
<div style="left:604px;top:189px;width:1px;height:511px;background:#d0d7e5"></div>
<div style="left:668px;top:189px;width:1px;height:511px;background:#d0d7e5"></div>
<div style="left:732px;top:189px;width:1px;height:511px;background:#d0d7e5"></div>
<div style="left:796px;top:189px;width:1px;height:511px;background:#d0d7e5"></div>
<div style="left:860px;top:189px;width:1px;height:511px;background:#d0d7e5"></div>
<div style="left:924px;top:189px;width:1px;height:511px;background:#d0d7e5"></div>
<div style="left:988px;top:189px;width:1px;height:511px;background:#d0d7e5"></div>
<div style="left:25px;top:208px;width:580px;height:1px;background:#000"></div>
<div style="left:25px;top:228px;width:580px;height:1px;background:#000"></div>
<div style="left:25px;top:248px;width:580px;height:1px;background:#000"></div>
<div style="left:25px;top:268px;width:580px;height:1px;background:#000"></div>
<div style="left:25px;top:288px;width:580px;height:1px;background:#000"></div>
<div style="left:25px;top:308px;width:580px;height:1px;background:#000"></div>
<div style="left:124px;top:188px;width:1px;height:121px;background:#000"></div>
<div style="left:188px;top:188px;width:1px;height:121px;background:#000"></div>
<div style="left:278px;top:188px;width:1px;height:121px;background:#000"></div>
<div style="left:355px;top:188px;width:1px;height:121px;background:#000"></div>
<div style="left:418px;top:188px;width:1px;height:121px;background:#000"></div>
<div style="left:519px;top:188px;width:1px;height:121px;background:#000"></div>
<div style="left:604px;top:188px;width:1px;height:121px;background:#000"></div>
<div class="t" style="left:28px;top:193px;font-size:13px;letter-spacing:0.3px;color:#000">Иванов</div>
<div class="t" style="left:88px;top:193px;width:98px;text-align:right;font-size:12.6px;color:#000">17</div>
<div class="t" style="left:178px;top:193px;width:98px;text-align:right;font-size:12.6px;color:#000">23</div>
<div class="t" style="left:255px;top:193px;width:98px;text-align:right;font-size:12.6px;color:#000">720000</div>
<div class="t" style="left:318px;top:193px;width:98px;text-align:right;font-size:12.6px;color:#000">3</div>
<div class="t" style="left:419px;top:193px;width:98px;text-align:right;font-size:12.6px;color:#000">57600</div>
<div class="t" style="left:504px;top:193px;width:98px;text-align:right;font-size:12.6px;color:#000">662400</div>
<div class="t" style="left:28px;top:213px;font-size:13px;letter-spacing:0.3px;color:#000">Петров</div>
<div class="t" style="left:88px;top:213px;width:98px;text-align:right;font-size:12.6px;color:#000">11</div>
<div class="t" style="left:178px;top:213px;width:98px;text-align:right;font-size:12.6px;color:#000">17</div>
<div class="t" style="left:255px;top:213px;width:98px;text-align:right;font-size:12.6px;color:#000">354783</div>
<div class="t" style="left:318px;top:213px;width:98px;text-align:right;font-size:12.6px;color:#000">2</div>
<div class="t" style="left:419px;top:213px;width:98px;text-align:right;font-size:12.6px;color:#000">42574</div>
<div class="t" style="left:504px;top:213px;width:98px;text-align:right;font-size:12.6px;color:#000">312209</div>
<div class="t" style="left:28px;top:233px;font-size:13px;letter-spacing:0.3px;color:#000">Сидоров</div>
<div class="t" style="left:88px;top:233px;width:98px;text-align:right;font-size:12.6px;color:#000">15</div>
<div class="t" style="left:178px;top:233px;width:98px;text-align:right;font-size:12.6px;color:#000">15</div>
<div class="t" style="left:255px;top:233px;width:98px;text-align:right;font-size:12.6px;color:#000">417391</div>
<div class="t" style="left:318px;top:233px;width:98px;text-align:right;font-size:12.6px;color:#000">2</div>
<div class="t" style="left:419px;top:233px;width:98px;text-align:right;font-size:12.6px;color:#000">50087</div>
<div class="t" style="left:504px;top:233px;width:98px;text-align:right;font-size:12.6px;color:#000">367304</div>
<div class="t" style="left:28px;top:253px;font-size:13px;letter-spacing:0.3px;color:#000">Кукушкин</div>
<div class="t" style="left:88px;top:253px;width:98px;text-align:right;font-size:12.6px;color:#000">8</div>
<div class="t" style="left:178px;top:253px;width:98px;text-align:right;font-size:12.6px;color:#000">22</div>
<div class="t" style="left:255px;top:253px;width:98px;text-align:right;font-size:12.6px;color:#000">344348</div>
<div class="t" style="left:318px;top:253px;width:98px;text-align:right;font-size:12.6px;color:#000">4</div>
<div class="t" style="left:419px;top:253px;width:98px;text-align:right;font-size:12.6px;color:#000">41322</div>
<div class="t" style="left:504px;top:253px;width:98px;text-align:right;font-size:12.6px;color:#000">303026</div>
<div class="t" style="left:28px;top:273px;font-size:13px;letter-spacing:0.3px;color:#000">Павленко</div>
<div class="t" style="left:88px;top:273px;width:98px;text-align:right;font-size:12.6px;color:#000">7</div>
<div class="t" style="left:178px;top:273px;width:98px;text-align:right;font-size:12.6px;color:#000">23</div>
<div class="t" style="left:255px;top:273px;width:98px;text-align:right;font-size:12.6px;color:#000">320000</div>
<div class="t" style="left:318px;top:273px;width:98px;text-align:right;font-size:12.6px;color:#000">3</div>
<div class="t" style="left:419px;top:273px;width:98px;text-align:right;font-size:12.6px;color:#000">38400</div>
<div class="t" style="left:504px;top:273px;width:98px;text-align:right;font-size:12.6px;color:#000">281600</div>
<div class="t" style="left:28px;top:293px;font-size:13px;letter-spacing:0.3px;color:#000">Давыдова</div>
<div class="t" style="left:88px;top:293px;width:98px;text-align:right;font-size:12.6px;color:#000">12</div>
<div class="t" style="left:178px;top:293px;width:98px;text-align:right;font-size:12.6px;color:#000">20</div>
<div class="t" style="left:255px;top:293px;width:98px;text-align:right;font-size:12.6px;color:#000">452174</div>
<div class="t" style="left:318px;top:293px;width:98px;text-align:right;font-size:12.6px;color:#000">1</div>
<div class="t" style="left:419px;top:293px;width:98px;text-align:right;font-size:12.6px;color:#000">54261</div>
<div class="t" style="left:504px;top:293px;width:98px;text-align:right;font-size:12.6px;color:#000">397913</div>
<div style="left:1008px;top:169px;width:16px;height:531px;background:linear-gradient(90deg,#a9c6ec 0,#7a9cc8 3px,#7799c6 100%)"></div>
<div style="left:1009px;top:170px;width:14px;height:5px;background:#fff;border:1px solid #8aa4c8"></div>
<div style="left:1011px;top:172px;width:9px;height:1px;background:#3a4a6a"></div>
<svg style="left:1008px;top:178px" width="16" height="12"><path d="M4 10 L8 5 L12 10Z" fill="#3c4870"/></svg>
<div style="left:1009px;top:210px;width:14px;height:437px;border:1px solid #4a5f8a;border-radius:2px;background:linear-gradient(90deg,#f0f2f6,#e4e9f0 40%,#c6d3e4 60%,#cad7e8 85%,#f0f4f8)"></div>
<svg style="left:1008px;top:686px" width="16" height="12"><path d="M4 3 L12 3 L8 8Z" fill="#3c4870"/></svg>
<svg style="left:1012px;top:424px" width="10" height="9"><path d="M1 1.5 H9 M1 3.5 H9 M1 5.5 H9 M1 7.5 H9" stroke="#6a7080" stroke-width="1"/></svg>
<div style="left:235px;top:315px;width:554px;height:364px;border:1px solid #c0d2d4;border-radius:6px;background:rgba(226,248,250,0.85);box-shadow:inset 1px 1px 0 #d0e2e2"></div>
<div style="left:242px;top:322px;width:542px;height:352px;border:1px solid #98a2a4;background:#e6f4f4"></div>
<div style="left:243px;top:323px;width:540px;height:350px;border-radius:9px;background:#fff;box-shadow:inset 0 0 0 1px #b8c4c4"></div>
<div style="left:252px;top:323px;width:522px;height:350px;background:#fff"></div>
<div style="left:243px;top:332px;width:540px;height:332px;background:#fff"></div>
<div style="left:239px;top:319px;width:2px;height:2px;background:#5a5a5a"></div>
<div style="left:243px;top:319px;width:2px;height:2px;background:#5a5a5a"></div>
<div style="left:239px;top:323px;width:2px;height:2px;background:#5a5a5a"></div>
<div style="left:779px;top:319px;width:2px;height:2px;background:#5a5a5a"></div>
<div style="left:783px;top:319px;width:2px;height:2px;background:#5a5a5a"></div>
<div style="left:783px;top:323px;width:2px;height:2px;background:#5a5a5a"></div>
<div style="left:783px;top:670px;width:2px;height:2px;background:#5a5a5a"></div>
<div style="left:779px;top:674px;width:2px;height:2px;background:#5a5a5a"></div>
<div style="left:783px;top:674px;width:2px;height:2px;background:#5a5a5a"></div>
<div style="left:239px;top:670px;width:2px;height:2px;background:#5a5a5a"></div>
<div style="left:239px;top:674px;width:2px;height:2px;background:#5a5a5a"></div>
<div style="left:243px;top:674px;width:2px;height:2px;background:#5a5a5a"></div>
<div style="left:505px;top:318px;width:2px;height:2px;background:#5a5a5a"></div>
<div style="left:505px;top:675px;width:2px;height:2px;background:#5a5a5a"></div>
<div style="left:509px;top:318px;width:2px;height:2px;background:#5a5a5a"></div>
<div style="left:509px;top:675px;width:2px;height:2px;background:#5a5a5a"></div>
<div style="left:513px;top:318px;width:2px;height:2px;background:#5a5a5a"></div>
<div style="left:513px;top:675px;width:2px;height:2px;background:#5a5a5a"></div>
<div style="left:517px;top:318px;width:2px;height:2px;background:#5a5a5a"></div>
<div style="left:517px;top:675px;width:2px;height:2px;background:#5a5a5a"></div>
<div style="left:238px;top:491px;width:2px;height:2px;background:#5a5a5a"></div>
<div style="left:784px;top:491px;width:2px;height:2px;background:#5a5a5a"></div>
<div style="left:238px;top:495px;width:2px;height:2px;background:#5a5a5a"></div>
<div style="left:784px;top:495px;width:2px;height:2px;background:#5a5a5a"></div>
<div style="left:238px;top:499px;width:2px;height:2px;background:#5a5a5a"></div>
<div style="left:784px;top:499px;width:2px;height:2px;background:#5a5a5a"></div>
<div style="left:238px;top:503px;width:2px;height:2px;background:#5a5a5a"></div>
<div style="left:784px;top:503px;width:2px;height:2px;background:#5a5a5a"></div>
<div class="t" style="left:380px;top:338px;width:262px;text-align:center;font-size:20px;font-weight:bold;color:#000">Заработная плата</div>
<svg style="left:0;top:0" width="1024" height="768"><line x1="310" y1="629.5" x2="676" y2="629.5" stroke="#868686" stroke-width="1"/><line x1="310" y1="601.5" x2="676" y2="601.5" stroke="#868686" stroke-width="1"/><line x1="310" y1="573.5" x2="676" y2="573.5" stroke="#868686" stroke-width="1"/><line x1="310" y1="545.5" x2="676" y2="545.5" stroke="#868686" stroke-width="1"/><line x1="310" y1="518.5" x2="676" y2="518.5" stroke="#868686" stroke-width="1"/><line x1="310" y1="490.5" x2="676" y2="490.5" stroke="#868686" stroke-width="1"/><line x1="310" y1="462.5" x2="676" y2="462.5" stroke="#868686" stroke-width="1"/><line x1="310" y1="434.5" x2="676" y2="434.5" stroke="#868686" stroke-width="1"/><line x1="310" y1="406.5" x2="676" y2="406.5" stroke="#868686" stroke-width="1"/><line x1="310" y1="378.5" x2="676" y2="378.5" stroke="#868686" stroke-width="1"/><line x1="309.5" y1="370" x2="309.5" y2="637" stroke="#868686" stroke-width="1"/><rect x="321.1" y="427.9" width="39" height="201.6" fill="#a64646"/><rect x="321.1" y="411.8" width="39" height="16.1" fill="#d39494"/><rect x="381.9" y="530.2" width="39" height="99.3" fill="#a64646"/><rect x="381.9" y="518.2" width="39" height="11.9" fill="#d39494"/><rect x="442.7" y="512.6" width="39" height="116.9" fill="#a64646"/><rect x="442.7" y="498.6" width="39" height="14.0" fill="#d39494"/><rect x="503.5" y="533.1" width="39" height="96.4" fill="#a64646"/><rect x="503.5" y="521.5" width="39" height="11.6" fill="#d39494"/><rect x="564.3" y="539.9" width="39" height="89.6" fill="#a64646"/><rect x="564.3" y="529.1" width="39" height="10.8" fill="#d39494"/><rect x="625.1" y="502.9" width="39" height="126.6" fill="#a64646"/><rect x="625.1" y="487.7" width="39" height="15.2" fill="#d39494"/><rect x="256.5" y="369.5" width="53" height="268" fill="none" stroke="#8a8a8a" stroke-width="1"/><circle cx="256.5" cy="369.5" r="2.3" fill="#d0dcec" stroke="#5a78a0" stroke-width="1"/><circle cx="309.5" cy="369.5" r="2.3" fill="#d0dcec" stroke="#5a78a0" stroke-width="1"/><circle cx="256.5" cy="637.5" r="2.3" fill="#d0dcec" stroke="#5a78a0" stroke-width="1"/><circle cx="309.5" cy="637.5" r="2.3" fill="#d0dcec" stroke="#5a78a0" stroke-width="1"/></svg>
<div class="t" style="left:200px;top:624px;width:97px;text-align:right;font-size:12px;color:#000">0</div>
<div class="t" style="left:200px;top:596px;width:97px;text-align:right;font-size:12px;color:#000">100000</div>
<div class="t" style="left:200px;top:568px;width:97px;text-align:right;font-size:12px;color:#000">200000</div>
<div class="t" style="left:200px;top:540px;width:97px;text-align:right;font-size:12px;color:#000">300000</div>
<div class="t" style="left:200px;top:513px;width:97px;text-align:right;font-size:12px;color:#000">400000</div>
<div class="t" style="left:200px;top:485px;width:97px;text-align:right;font-size:12px;color:#000">500000</div>
<div class="t" style="left:200px;top:457px;width:97px;text-align:right;font-size:12px;color:#000">600000</div>
<div class="t" style="left:200px;top:429px;width:97px;text-align:right;font-size:12px;color:#000">700000</div>
<div class="t" style="left:200px;top:401px;width:97px;text-align:right;font-size:12px;color:#000">800000</div>
<div class="t" style="left:200px;top:373px;width:97px;text-align:right;font-size:12px;color:#000">900000</div>
<div class="t" style="left:290.5px;top:646px;width:100px;text-align:center;font-size:12px;color:#000">Иванов</div>
<div class="t" style="left:351.3px;top:646px;width:100px;text-align:center;font-size:12px;color:#000">Петров</div>
<div class="t" style="left:412.1px;top:646px;width:100px;text-align:center;font-size:12px;color:#000">Сидоров</div>
<div class="t" style="left:472.9px;top:646px;width:100px;text-align:center;font-size:12px;color:#000">Кукушкин</div>
<div class="t" style="left:533.7px;top:646px;width:100px;text-align:center;font-size:12px;color:#000">Павленко</div>
<div class="t" style="left:594.5px;top:646px;width:100px;text-align:center;font-size:12px;color:#000">Давыдова</div>
<div style="left:697px;top:502px;width:7px;height:8px;background:#d39494"></div>
<div style="left:697px;top:527px;width:7px;height:8px;background:#a64646"></div>
<div class="t" style="left:708px;top:501px;font-size:12px;color:#000">Удержано</div>
<div class="t" style="left:708px;top:525px;font-size:12px;color:#000">Начислено</div>
<div style="left:0;top:700px;width:1024px;height:16px;background:linear-gradient(#a8c0e2,#9db6da 50%,#93aed6)"></div>
<div style="left:0;top:700px;width:1024px;height:1px;background:#8ea8cc"></div>
<div style="left:0;top:701px;width:62px;height:14px;background:linear-gradient(#e2ebf6,#cddcef 55%,#c0d3ec)"></div>
<svg style="left:0;top:700px" width="62" height="16">
<rect x="6" y="4" width="1.5" height="8" fill="#2a4a88"/><path d="M13 4 L8 8 L13 12Z" fill="#2a4a88"/>
<path d="M26 4 L21 8 L26 12Z" fill="#2a4a88"/>
<path d="M36 4 L41 8 L36 12Z" fill="#2a4a88"/>
<path d="M49 4 L54 8 L49 12Z" fill="#2a4a88"/><rect x="54.5" y="4" width="1.5" height="8" fill="#2a4a88"/>
</svg>
<div style="left:61px;top:701px;width:1px;height:14px;background:#b0c4de"></div>
<svg style="left:0;top:0" width="1024" height="768"><defs><linearGradient id="tgr" x1="0" y1="0" x2="0" y2="1"><stop offset="0" stop-color="#e8f0f9"/><stop offset="0.45" stop-color="#d6e3f4"/><stop offset="0.55" stop-color="#c8daf0"/><stop offset="1" stop-color="#d4e2f4"/></linearGradient></defs><path d="M62.5 714.5 L62.5 700.5 L170 700.5 L159 714.5 Z" fill="url(#tgr)" stroke="#8ea8cc" stroke-width="1"/><path d="M155 714.5 L166 700.5 L250.5 700.5 L250.5 714.5 Z" fill="url(#tgr)" stroke="#8ea8cc" stroke-width="1"/><defs><linearGradient id="tga" x1="0" y1="0" x2="0" y2="1"><stop offset="0" stop-color="#ffffff"/><stop offset="0.6" stop-color="#f6f9fc"/><stop offset="1" stop-color="#dfe8f4"/></linearGradient></defs><path d="M251 700 L251 712 L253 714.5 L310 714.5 L310 700 Z" fill="url(#tga)"/><path d="M247 714.5 L251 710 L252 714.5Z" fill="#8ea8cc"/><path d="M303 714.5 L314 700.5 L366 700.5 L355 714.5 Z" fill="url(#tgr)" stroke="#8ea8cc" stroke-width="1"/><path d="M355 714.5 L366 700.5 L421 700.5 L410 714.5 Z" fill="url(#tgr)" stroke="#8ea8cc" stroke-width="1"/><path d="M410 714.5 L421 700.5 L452 700.5 L441 714.5 Z" fill="url(#tgr)" stroke="#8ea8cc" stroke-width="1"/></svg>
<div class="t" style="left:77px;top:703px;font-size:11.5px;color:#1e3a78">Диаграмма1</div>
<div class="t" style="left:171px;top:703px;font-size:11.5px;color:#1e3a78">Диаграмма2</div>
<div class="t" style="left:314px;top:703px;font-size:11.5px;color:#1e3a78">Лист2</div>
<div class="t" style="left:367px;top:703px;font-size:11.5px;color:#1e3a78">Лист3</div>
<div class="t" style="left:260px;top:703px;font-size:12px;font-weight:bold;color:#1a2a60">Лист1</div>
<svg style="left:418px;top:702px" width="20" height="13">
<path d="M6.5 4.5 H16.5 V10.5 H9 L7 12.5 Z" fill="#e8eef6" stroke="#4a5a7a"/>
<path d="M5 0.5 V7.5 M1.5 4 H8.5 M2.5 1.5 L7.5 6.5 M7.5 1.5 L2.5 6.5" stroke="#f5a020" stroke-width="1.2"/>
<circle cx="5" cy="4" r="1.6" fill="#fff4c0"/>
</svg>
<div style="left:0;top:715px;width:1024px;height:1px;background:#6a88b8"></div>
<div style="left:605px;top:701px;width:6px;height:14px;background:#fff;border:1px solid #8aa4c8"></div>
<div style="left:607px;top:704px;width:1px;height:8px;background:#5a6a8a"></div>
<div style="left:611px;top:701px;width:396px;height:14px;background:linear-gradient(#7e9fcc,#7799c6)"></div>
<svg style="left:611px;top:701px" width="16" height="14"><path d="M10 3 L5 7 L10 11Z" fill="#3c4870"/></svg>
<div style="left:628px;top:702px;width:302px;height:12px;border:1px solid #4a5f8a;border-radius:2px;background:linear-gradient(#f4f6f9,#e6eaf0 40%,#c8d4e4 60%,#b8c8dc)"></div>
<svg style="left:775px;top:705px" width="10" height="7"><path d="M0.5 0 V6 M2.5 0 V6 M4.5 0 V6 M6.5 0 V6" stroke="#7a8aa8"/></svg>
<svg style="left:988px;top:701px" width="16" height="14"><path d="M4 3 L9 7 L4 11Z" fill="#3c4870"/></svg>
<div style="left:1003px;top:701px;width:5px;height:14px;background:#fff;border:1px solid #8aa4c8"></div>
<div style="left:1008px;top:701px;width:16px;height:14px;background:#9ab4d8"></div>
<div style="left:0;top:716px;width:1024px;height:22px;background:linear-gradient(#e8f0fa,#d8e6f6 40%,#c8daf1 60%,#bed3ef)"></div>
<div style="left:0;top:716px;width:1024px;height:1px;background:#f0f5fb"></div>
<div class="t" style="left:7px;top:722px;font-size:11.5px;color:#1e3060">Готово</div>
<div style="left:60px;top:718px;width:1px;height:19px;background:#a8bcd8"></div>
<div style="left:61px;top:718px;width:1px;height:19px;background:#f2f6fb"></div>
<div style="left:777px;top:718px;width:1px;height:19px;background:#a8bcd8"></div>
<div style="left:784px;top:719px;width:56px;height:17px;border:1px solid #b0c4dc;border-radius:3px;background:linear-gradient(#e8f0fa,#d0e0f2)"></div>
<div style="left:785px;top:720px;width:18px;height:15px;border-radius:2px;background:linear-gradient(#fde9a8,#f8c860 50%,#f6b840 52%,#fbd880)"></div>
<svg style="left:784px;top:719px" width="56" height="17">
<rect x="4.5" y="4.5" width="10" height="8" fill="#fff" stroke="#5a5a5a"/>
<path d="M4.5 7 H14.5 M4.5 10 H14.5 M8 4.5 V12.5 M11 4.5 V12.5" stroke="#5a5a5a" stroke-width="0.8"/>
<rect x="22.5" y="3.5" width="11" height="10" fill="#f0f0f0" stroke="#5a5a5a"/><rect x="25.5" y="5.5" width="5" height="6" fill="#fff" stroke="#8a8a8a" stroke-width="0.8"/>
<rect x="40.5" y="3.5" width="11" height="10" fill="#f0f0f0" stroke="#5a5a5a"/><rect x="43" y="4" width="2" height="6" fill="#5a5a5a"/><rect x="47" y="4" width="2" height="6" fill="#5a5a5a"/>
</svg>
<div class="t" style="left:848px;top:721px;font-size:11.5px;color:#1e3060">100%</div>
<svg style="left:882px;top:717px" width="142" height="21">
<defs><radialGradient id="zg" cx="50%" cy="35%" r="60%"><stop offset="0" stop-color="#ffffff"/><stop offset="1" stop-color="#c8d6ea"/></radialGradient></defs>
<line x1="18" y1="10.5" x2="122" y2="10.5" stroke="#8aa0c0" stroke-width="1"/>
<line x1="18" y1="11.5" x2="122" y2="11.5" stroke="#f4f8fc" stroke-width="1"/>
<circle cx="11" cy="10.5" r="7" fill="url(#zg)" stroke="#7a8ca8"/><rect x="7" y="9.5" width="8" height="2.2" fill="#4a5468"/>
<circle cx="128" cy="10.5" r="7" fill="url(#zg)" stroke="#7a8ca8"/><rect x="124" y="9.5" width="8" height="2.2" fill="#4a5468"/><rect x="127" y="6.5" width="2.2" height="8" fill="#4a5468"/>
<path d="M66.5 4.5 H73.5 V13 L70 16 L66.5 13 Z" fill="#eef2f8" stroke="#6a7c98"/>
<line x1="70" y1="6" x2="70" y2="12" stroke="#8a9ab0"/>
</svg>
<div style="left:0;top:738px;width:1024px;height:30px;background:linear-gradient(#3a80f0 0,#2a6ae6 2px,#2458d8 8%,#2254d4 50%,#2254d4 90%,#1a48c0)"></div>
<div style="left:931px;top:738px;width:93px;height:30px;background:linear-gradient(#3cb8f8 0,#16a0ec 8%,#1090e0 50%,#1496e6 90%,#0c80d0);border-left:1px solid #0a68b8"></div>
<div style="left:0;top:738px;width:97px;height:30px;border-radius:0 12px 12px 0;background:linear-gradient(#5ab05a 0,#3c9c44 12%,#3aa648 50%,#34a044 80%,#2c8a38);box-shadow:inset -3px 0 4px rgba(0,40,0,0.35),inset 2px 2px 3px rgba(255,255,255,0.15)"></div>
<svg style="left:9px;top:744px" width="22" height="20">
<path d="M2 3 Q5 1 9 3 L8 9 Q5 7 1 9Z" fill="#f05a28"/>
<path d="M10 3 Q14 5 18 3 L17 9 Q13 11 9 9Z" fill="#7cc040"/>
<path d="M1 10 Q5 8 8 10 L7 16 Q4 14 0 16Z" fill="#2a8ae8"/>
<path d="M9 10 Q13 12 17 10 L16 16 Q12 18 8 16Z" fill="#f8c010"/>
</svg>
<div class="t" style="left:35px;top:745px;font-size:16px;font-weight:bold;font-style:italic;color:#fff;text-shadow:1px 1px 1px #1a4a1a">пуск</div>
<div style="left:105px;top:741px;width:160px;height:25px;border-radius:3px;background:linear-gradient(#1c3ea8,#1e48c0 30%,#2050c8);border:1px solid #163a98"></div>
<div style="left:268px;top:741px;width:156px;height:25px;border-radius:3px;background:linear-gradient(#4a90f8,#3a7cf0 20%,#3470e8 80%,#2e62d8);border:1px solid #2858c8"></div>
<svg style="left:117px;top:745px" width="16" height="16">
<rect x="1" y="1" width="13" height="14" fill="#f4faf2" stroke="#4a8a40"/>
<rect x="0" y="3" width="9" height="10" fill="#3a8a30"/><path d="M2 5 L7 11 M7 5 L2 11" stroke="#fff" stroke-width="1.5"/>
</svg>
<div class="t" style="left:135px;top:748px;font-size:11.1px;color:#fff">Microsoft Excel - Кни...</div>
<svg style="left:276px;top:745px" width="16" height="16">
<rect x="3" y="1" width="12" height="14" fill="#fff" stroke="#5a6a8a"/>
<path d="M5 5 H13 M5 8 H13 M5 11 H13" stroke="#8a9ab8"/>
<rect x="1" y="3" width="8" height="8" fill="#fff" stroke="#2a4a98"/><text x="5" y="10" font-size="7" font-weight="bold" fill="#2a4a98" text-anchor="middle" font-family="Liberation Sans">W</text>
</svg>
<div class="t" style="left:295px;top:748px;font-size:10.8px;color:#fff">Лекция 2ГРАФИЧЕС...</div>
<div style="left:896px;top:746px;width:17px;height:16px;background:#3a6ad8"></div>
<div class="t" style="left:897px;top:749px;font-size:11px;color:#fff">RU</div>
<svg style="left:922px;top:743px" width="60" height="22">
<defs><radialGradient id="cg" cx="40%" cy="35%" r="70%"><stop offset="0" stop-color="#8ad0ff"/><stop offset="1" stop-color="#1a60c8"/></radialGradient></defs>
<circle cx="10" cy="10.5" r="8" fill="url(#cg)" stroke="#c8e0ff" stroke-width="0.8"/>
<path d="M12 6.5 L8.5 10.5 L12 14.5" fill="none" stroke="#fff" stroke-width="2.2"/>
<rect x="21" y="5" width="9" height="7" fill="#a8d8f8" stroke="#4a6a98" stroke-width="0.8"/><rect x="22" y="13" width="8" height="3" fill="#d0d8e8"/>
<path d="M31 5 Q33 8 31 11 M33.5 3.5 Q36.5 8 33.5 12.5 M36 2 Q40 8 36 14" fill="none" stroke="#7cd83a" stroke-width="1.3"/>
<rect x="38" y="15" width="3" height="4" fill="#28d018"/><rect x="42" y="11" width="3" height="8" fill="#28d018"/><rect x="46" y="7" width="3" height="12" fill="#28d018"/><rect x="50" y="2" width="3" height="17" fill="#fff"/>
</svg>
<div class="t" style="left:983px;top:748px;font-size:11.2px;color:#fff">18:14</div></body></html>
